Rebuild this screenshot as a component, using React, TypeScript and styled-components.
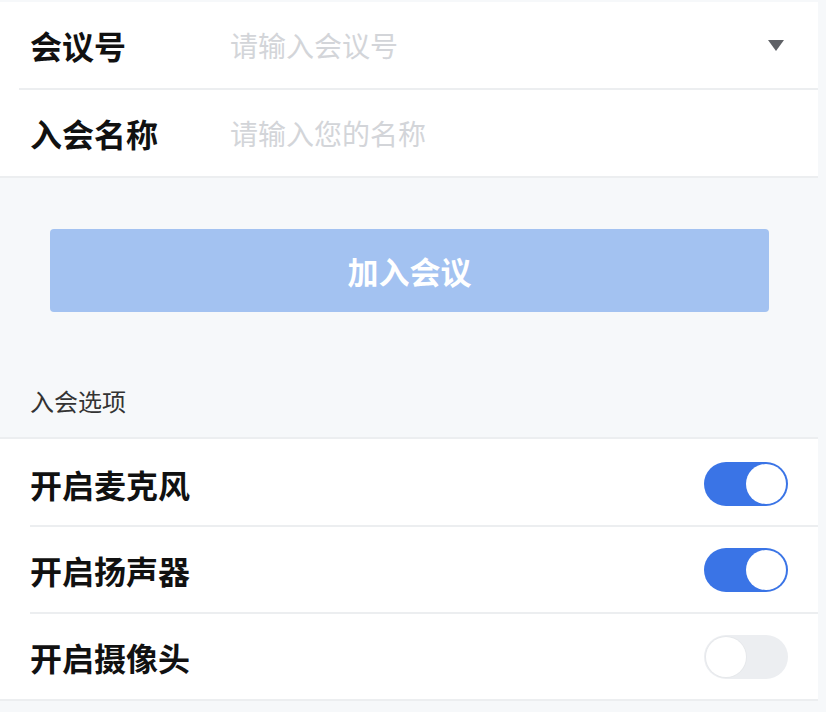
import styled, { createGlobalStyle } from "styled-components";

const GlobalStyle = createGlobalStyle`
    html, body {
        margin: 0;
        padding: 0;
        background: #f6f8fa;
        font-family: "Noto Sans CJK SC", "Noto Sans", sans-serif;
    }
`;

type OptionType = {
    label: string;
    on: boolean;
};

const options: Array<OptionType> = [
    { label: "开启麦克风", on: true },
    { label: "开启扬声器", on: true },
    { label: "开启摄像头", on: false },
];

export default function App() {
    return (
        <>
            <GlobalStyle />
            <Page>
                <Panel>
                    <FieldRow>
                        <Label>会议号</Label>
                        <Input placeholder="请输入会议号" />
                        <Arrow />
                    </FieldRow>
                    <FieldRow>
                        <Label>入会名称</Label>
                        <Input placeholder="请输入您的名称" />
                    </FieldRow>
                </Panel>
                <ButtonArea>
                    <JoinButton>加入会议</JoinButton>
                </ButtonArea>
                <SectionTitle>入会选项</SectionTitle>
                <Panel>
                    {options.map((item, index) => (
                        <OptionRow key={index}>
                            <OptionLabel>{item.label}</OptionLabel>
                            <Switch $on={item.on}>
                                <Knob $on={item.on} />
                            </Switch>
                        </OptionRow>
                    ))}
                </Panel>
            </Page>
        </>
    );
}

const Page = styled.div`
    width: 818px;
    padding-top: 2px;
    min-height: 712px;
    box-sizing: border-box;
`;

const Panel = styled.div`
    background: #ffffff;
    border-bottom: 2px solid #eceef0;
`;

const FieldRow = styled.div`
    display: flex;
    align-items: center;
    height: 86px;
    margin-left: 19px;
    padding-left: 11px;
    padding-right: 34px;
    & + & {
        border-top: 2px solid #eceef0;
    }
`;

const Label = styled.div`
    width: 200px;
    font-size: 32px;
    font-weight: 700;
    color: #111111;
`;

const Input = styled.input`
    flex: 1;
    border: none;
    outline: none;
    background: transparent;
    font-family: inherit;
    font-size: 28px;
    color: #333;
    padding: 0;
    &::placeholder {
        color: #d3d5d9;
    }
`;

const Arrow = styled.div`
    width: 0;
    height: 0;
    border-left: 8px solid transparent;
    border-right: 8px solid transparent;
    border-top: 11px solid #5f6166;
`;

const ButtonArea = styled.div`
    padding: 51px 49px 0 50px;
`;

const JoinButton = styled.div`
    height: 83px;
    border-radius: 4px;
    background: #a3c2f1;
    color: #ffffff;
    font-size: 31px;
    font-weight: 700;
    display: flex;
    align-items: center;
    justify-content: center;
`;

const SectionTitle = styled.div`
    padding: 72px 0 19px 30px;
    font-size: 24px;
    color: #333333;
    line-height: 34px;
    border-bottom: 2px solid #eceef0;
`;

const OptionRow = styled.div`
    display: flex;
    align-items: center;
    justify-content: space-between;
    height: 85px;
    margin-left: 30px;
    padding-right: 30px;
    & + & {
        border-top: 2px solid #eceef0;
    }
    &:first-child {
        padding-top: 3px;
        height: 83px;
    }
`;

const OptionLabel = styled.div`
    font-size: 32px;
    font-weight: 700;
    color: #111111;
`;

const Switch = styled.div<{ $on: boolean }>`
    width: 84px;
    height: 44px;
    border-radius: 22px;
    background: ${(p) => (p.$on ? "#3a74e6" : "#eceef1")};
    display: flex;
    align-items: center;
    justify-content: ${(p) => (p.$on ? "flex-end" : "flex-start")};
    padding: 2px;
    box-sizing: border-box;
`;

const Knob = styled.div<{ $on: boolean }>`
    width: 40px;
    height: 40px;
    border-radius: 50%;
    background: #ffffff;
    box-shadow: ${(p) => (p.$on ? "none" : "0 0 0 1px #e6e8eb")};
`;
